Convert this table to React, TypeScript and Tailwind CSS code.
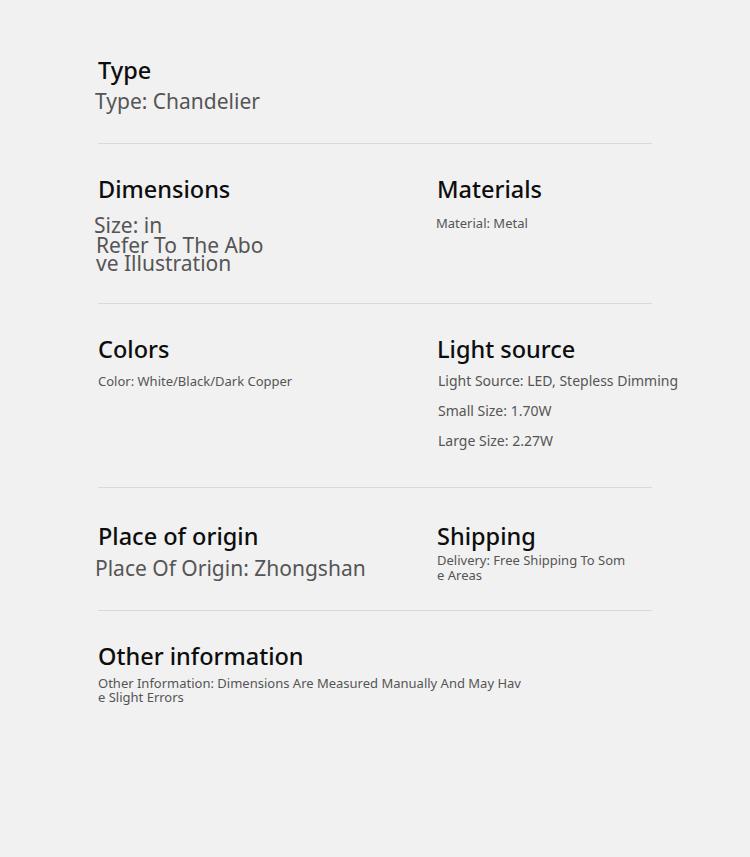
const heading = "text-[23.5px] leading-[28px] font-medium text-[#0d0d0d] [font-family:Inter,'Liberation Sans',sans-serif]";
const body = "text-[#555] [font-family:'Noto Sans','Open Sans',sans-serif]";

function Divider() {
    return <div className="h-px bg-[#d9d9d9] w-[554px]" />;
}

export default function App() {
    return (
        <div className="min-h-[857px] w-full bg-[#f1f1f1] pl-[98px] pt-[56px]">
            {/* type */}
            <div className="h-[87px]">
                <h2 className={heading}>Type</h2>
                <p className={`${body} text-[21px] leading-[26px] -ml-[3px] mt-[4px]`}>
                    Type: Chandelier
                </p>
            </div>
            <Divider />

            {/* dimensions / materials */}
            <div className="grid grid-cols-[339px_1fr] h-[159px] pt-[31px]">
                <div>
                    <h2 className={heading}>Dimensions</h2>
                    <p className={`${body} text-[21px] leading-[22px] -ml-[4px] mt-[11px]`}>
                        Size: in
                    </p>
                    <p className={`${body} text-[21px] leading-[18px] -ml-[2px] mt-0 w-[180px]`}>
                        Refer To The Abo
                        <br />
                        ve Illustration
                    </p>
                </div>
                <div>
                    <h2 className={heading}>Materials</h2>
                    <p className={`${body} text-[13px] leading-[18px] -ml-[1px] mt-[11px]`}>
                        Material: Metal
                    </p>
                </div>
            </div>
            <Divider />

            {/* colors / light source */}
            <div className="grid grid-cols-[339px_1fr] h-[183px] pt-[31px]">
                <div>
                    <h2 className={heading}>Colors</h2>
                    <p className={`${body} text-[13px] leading-[18px] mt-[9px]`}>
                        Color: White/Black/Dark Copper
                    </p>
                </div>
                <div>
                    <h2 className={heading}>Light source</h2>
                    <div className={`${body} text-[14px] leading-[18px] flex flex-col gap-[12px] mt-[9px] ml-[1px]`}>
                        <p>Light Source: LED, Stepless Dimming</p>
                        <p>Small Size: 1.70W</p>
                        <p>Large Size: 2.27W</p>
                    </div>
                </div>
            </div>
            <Divider />

            {/* origin / shipping */}
            <div className="grid grid-cols-[339px_1fr] h-[122px] pt-[34px]">
                <div>
                    <h2 className={heading}>Place of origin</h2>
                    <p className={`${body} text-[21px] leading-[26px] -ml-[3px] mt-[5px]`}>
                        Place Of Origin: Zhongshan
                    </p>
                </div>
                <div>
                    <h2 className={heading}>Shipping</h2>
                    <p className={`${body} text-[13px] leading-[15px] mt-[3px] w-[200px]`}>
                        Delivery: Free Shipping To Som
                        <br />
                        e Areas
                    </p>
                </div>
            </div>
            <Divider />

            {/* other */}
            <div className="pt-[31px]">
                <h2 className={heading}>Other information</h2>
                <p className={`${body} text-[13px] leading-[14px] mt-[6px]`}>
                    Other Information: Dimensions Are Measured Manually And May Hav
                    <br />
                    e Slight Errors
                </p>
            </div>
        </div>
    );
}
